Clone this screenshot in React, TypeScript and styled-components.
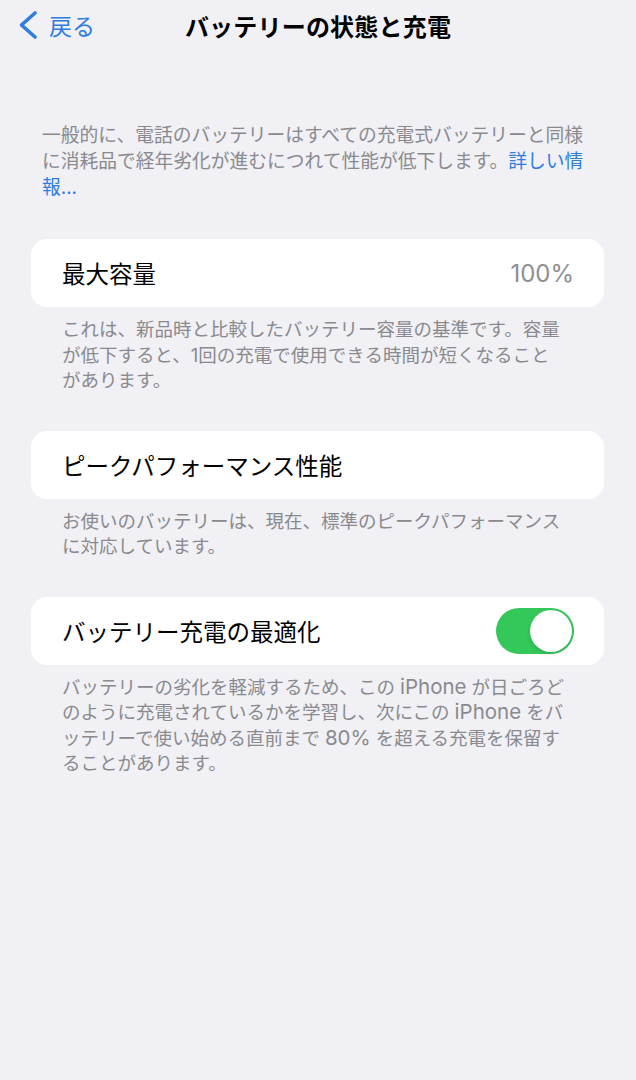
import React, { useState } from "react";
import styled, { createGlobalStyle } from "styled-components";

const FONT = `"Inter", "Noto Sans CJK JP", "Noto Sans", sans-serif`;
const BLUE = "#2f7de1";
const GRAY = "#8a8a8e";

const GlobalStyle = createGlobalStyle`
  html, body {
    margin: 0;
    padding: 0;
    background: #f0f0f5;
  }
  body {
    font-family: ${FONT};
    -webkit-font-smoothing: antialiased;
  }
`;

// footers keep the line breaks of the system settings screen
const CapacityNote = () => (
  <>
    これは、新品時と比較したバッテリー容量の基準です。容量
    <br />
    が低下すると、1回の充電で使用できる時間が短くなること
    <br />
    があります。
  </>
);

const PerformanceNote = () => (
  <>
    お使いのバッテリーは、現在、標準のピークパフォーマンス
    <br />
    に対応しています。
  </>
);

const OptimizeNote = () => (
  <>
    バッテリーの劣化を軽減するため、この<Latin>iPhone</Latin>が日ごろど
    <br />
    のように充電されているかを学習し、次にこの<Latin>iPhone</Latin>をバ
    <br />
    ッテリーで使い始める直前まで<Latin>80%</Latin>を超える充電を保留す
    <br />
    ることがあります。
  </>
);

type Section = {
  title: string;
  value?: string;
  toggle?: boolean;
  footer: React.ReactNode;
};

const sections: Section[] = [
  { title: "最大容量", value: "100%", footer: <CapacityNote /> },
  { title: "ピークパフォーマンス性能", footer: <PerformanceNote /> },
  { title: "バッテリー充電の最適化", toggle: true, footer: <OptimizeNote /> },
];

const BackIcon = () => (
  <svg width="20" height="28" viewBox="0 0 20 28" fill="none">
    <path d="M17 2 L3.5 14 L17 26" stroke={BLUE} strokeWidth="3.6" strokeLinecap="round" strokeLinejoin="round" />
  </svg>
);

const Switch: React.FC<{ on: boolean; onToggle: () => void }> = ({ on, onToggle }) => (
  <Track $on={on} onClick={onToggle} role="switch" aria-checked={on}>
    <Knob $on={on} />
  </Track>
);

const App: React.FC = () => {
  const [optimized, setOptimized] = useState(true);

  return (
    <Page>
      <GlobalStyle />
      <NavBar>
        <BackButton>
          <BackIcon />
          <span>戻る</span>
        </BackButton>
        <Title>バッテリーの状態と充電</Title>
        <div />
      </NavBar>

      <Intro>
        一般的に、電話のバッテリーはすべての充電式バッテリーと同様
        <br />
        に消耗品で経年劣化が進むにつれて性能が低下します。
        <MoreLink>
          詳しい情
          <br />
          報...
        </MoreLink>
      </Intro>

      {sections.map((s) => (
        <Group key={s.title}>
          <Card>
            <RowLabel>{s.title}</RowLabel>
            {s.value && <RowValue>{s.value}</RowValue>}
            {s.toggle && <Switch on={optimized} onToggle={() => setOptimized(!optimized)} />}
          </Card>
          <Footer>{s.footer}</Footer>
        </Group>
      ))}
    </Page>
  );
};

export default App;

const Page = styled.div`
  min-height: 1080px;
  background: #f0f0f5;
  display: flex;
  flex-direction: column;
`;

const NavBar = styled.header`
  height: 50px;
  display: grid;
  grid-template-columns: 1fr auto 1fr;
  align-items: center;
`;

const BackButton = styled.div`
  display: flex;
  align-items: center;
  gap: 11px;
  padding-left: 18px;
  color: ${BLUE};
  font-size: 23px;
  cursor: pointer;
`;

const Title = styled.h1`
  margin: 0;
  font-size: 24px;
  font-weight: 700;
  color: #000;
  letter-spacing: 0.2px;
`;

const Intro = styled.p`
  margin: 73px 30px 0 42px;
  font-size: 18.75px;
  line-height: 26px;
  color: ${GRAY};
`;

const MoreLink = styled.span`
  color: ${BLUE};
`;

const Group = styled.section`
  margin-top: 37px;
  &:first-of-type {
    margin-top: 38px;
  }
`;

const Card = styled.div`
  margin: 0 32px 0 31px;
  height: 68px;
  background: #fff;
  border-radius: 16px;
  display: flex;
  align-items: center;
  justify-content: space-between;
  padding: 0 30px 0 31px;
`;

const RowLabel = styled.span`
  font-size: 23.5px;
  color: #000;
`;

const RowValue = styled.span`
  font-size: 24px;
  color: #8e8e93;
`;

const Footer = styled.p`
  margin: 10px 40px 0 62px;
  font-size: 18.5px;
  line-height: 25.5px;
  color: ${GRAY};
`;

const Latin = styled.span`
  margin: 0 5px;
  font-size: 20.5px;
  line-height: 1;
`;

const Track = styled.div<{ $on: boolean }>`
  position: relative;
  width: 78px;
  height: 46px;
  border-radius: 23px;
  background: ${(p) => (p.$on ? "#34c759" : "#e5e5ea")};
  cursor: pointer;
  flex-shrink: 0;
`;

const Knob = styled.div<{ $on: boolean }>`
  position: absolute;
  top: 2px;
  left: ${(p) => (p.$on ? "34px" : "2px")};
  width: 42px;
  height: 42px;
  border-radius: 50%;
  background: #fff;
  box-shadow: 0 2px 4px rgba(0, 0, 0, 0.12);
`;
